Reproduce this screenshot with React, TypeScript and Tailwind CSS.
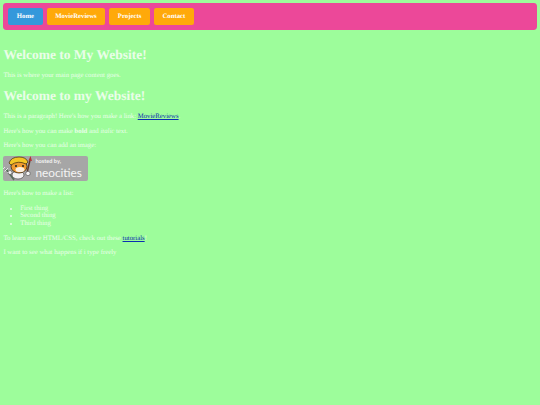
const navItems = [
  { label: "Home", active: true },
  { label: "MovieReviews", active: false },
  { label: "Projects", active: false },
  { label: "Contact", active: false },
];

function NeocitiesBadge() {
  return (
    <div className="relative flex w-[84.4px] h-[25px] rounded-[2px] bg-[#a6a6a6]">
      <svg viewBox="0 0 32 28" className="absolute left-[-1px] top-[-2px] w-[32px] h-[28px]">
        {/* fork */}
        <path d="M4 15 L12 26" stroke="#56705a" strokeWidth="1.5" />
        <path d="M1 15 L3 13 M2.5 17.5 L6 14 M5 19 L7.5 16.5" stroke="#e6e6e6" strokeWidth="1" />
        {/* brush */}
        <path d="M28 6 L25 19" stroke="#5e3a2c" strokeWidth="1.5" />
        <path d="M28.5 2 L30 7 L26.5 6.5 Z" fill="#b23636" />
        {/* body and paws */}
        <ellipse cx="16" cy="21" rx="6" ry="4" fill="#f2f2f2" stroke="#333" strokeWidth="0.6" />
        <circle cx="8" cy="18.5" r="2" fill="#f4f4f4" stroke="#333" strokeWidth="0.5" />
        <circle cx="26" cy="19.5" r="2.2" fill="#f4f4f4" stroke="#333" strokeWidth="0.5" />
        {/* head */}
        <ellipse cx="17" cy="12.5" rx="8" ry="6.5" fill="#ee9a2e" stroke="#3a2a10" strokeWidth="0.8" />
        <path d="M7 9 Q9 3 17 3 Q24 3 26 8 L24 10 Q16 6 9 11 Z" fill="#f3c626" stroke="#3a2a10" strokeWidth="0.7" />
        <ellipse cx="18" cy="15.5" rx="4.5" ry="2.6" fill="#fbeede" />
        <circle cx="14" cy="12" r="1" fill="#1e1e1e" />
        <circle cx="21" cy="12" r="1" fill="#1e1e1e" />
      </svg>
      <div className="flex flex-col ml-[32px] text-[#f4f4f4] font-['Lato',sans-serif] leading-none">
        <span className="mt-[3px] h-[6px] text-[5.6px] font-bold leading-[6px]">hosted by,</span>
        <span className="mt-[1.5px] h-[13px] text-[11.8px] leading-[13px]">neocities</span>
      </div>
    </div>
  );
}

export default function App() {
  return (
    <div className="min-h-[405px] bg-[#9dfd9b] p-[3.4px] font-['Liberation_Serif',serif] text-[6.75px] leading-[7.76px] text-[#eafde9] [text-rendering:geometricPrecision]">
      <nav className="flex gap-[4.2px] pl-[5px] pr-[4.6px] py-[5px] rounded-[3.4px] bg-[#ec4899]">
        {navItems.map((item) => (
          <a
            key={item.label}
            className={`px-[8.44px] py-[4.2px] rounded-[2.1px] font-bold text-white ${item.active ? "bg-[#3498db]" : "bg-[#ffa90a]"}`}
          >
            {item.label}
          </a>
        ))}
      </nav>

      <h1 className="mt-[17.5px] text-[13.5px] leading-[15.5px] font-bold">Welcome to My Website!</h1>
      <p className="mt-[9px]">This is where your main page content goes.</p>

      <h1 className="mt-[9px] text-[13.5px] leading-[15.5px] font-bold">Welcome to my Website!</h1>
      <p className="mt-[9.6px]">
        This is a paragraph! Here's how you make a link:{" "}
        <a className="text-[#0a2fb0] underline">MovieReviews</a>.
      </p>
      <p className="mt-[6.75px]">
        Here's how you can make <strong>bold</strong> and <em>italic</em> text.
      </p>
      <p className="mt-[6.75px]">Here's how you can add an image:</p>
      <div className="mt-[5.7px]">
        <NeocitiesBadge />
      </div>
      <p className="mt-[9.3px]">Here's how to make a list:</p>
      <ul className="mt-[6.75px] pl-[16.9px] list-disc">
        <li>First thing</li>
        <li>Second thing</li>
        <li>Third thing</li>
      </ul>
      <p className="mt-[6.75px]">
        To learn more HTML/CSS, check out these <a className="text-[#0a2fb0] underline">tutorials</a>!
      </p>
      <p className="mt-[6.75px]">I want to see what happens if i type freely</p>
    </div>
  );
}
